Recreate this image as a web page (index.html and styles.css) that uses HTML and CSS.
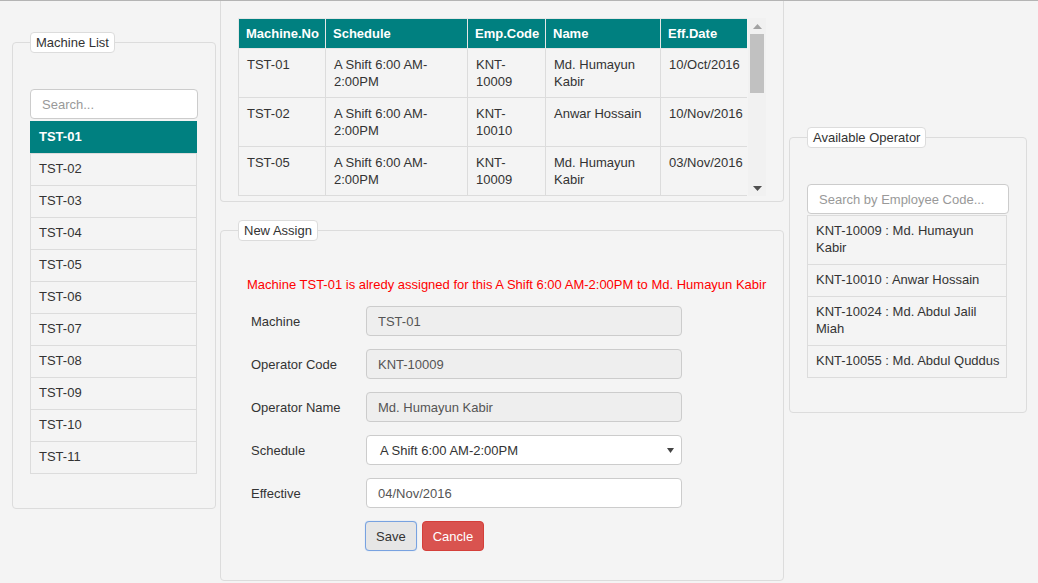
FILE: index.html
```html
<!DOCTYPE html>
<html>
<head>
<meta charset="utf-8">
<link rel="stylesheet" href="styles.css">
</head>
<body>
<div class="page">
  <div class="col-left">
    <fieldset class="panel">
      <legend>Machine List</legend>
      <input class="field search" type="text" placeholder="Search...">
      <ul class="list machines">
        <li class="active">TST-01</li>
        <li>TST-02</li>
        <li>TST-03</li>
        <li>TST-04</li>
        <li>TST-05</li>
        <li>TST-06</li>
        <li>TST-07</li>
        <li>TST-08</li>
        <li>TST-09</li>
        <li>TST-10</li>
        <li>TST-11</li>
      </ul>
    </fieldset>
  </div>

  <div class="col-center">
    <div class="table-panel">
      <div class="table-scroll">
        <div class="table-view">
          <table class="grid">
            <colgroup>
              <col class="c1"><col class="c2"><col class="c3"><col class="c4"><col class="c5">
            </colgroup>
            <thead>
              <tr><th>Machine.No</th><th>Schedule</th><th>Emp.Code</th><th>Name</th><th>Eff.Date</th></tr>
            </thead>
            <tbody>
              <tr><td>TST-01</td><td>A Shift 6:00 AM-2:00PM</td><td>KNT-10009</td><td>Md. Humayun Kabir</td><td>10/Oct/2016</td></tr>
              <tr><td>TST-02</td><td>A Shift 6:00 AM-2:00PM</td><td>KNT-10010</td><td>Anwar Hossain</td><td>10/Nov/2016</td></tr>
              <tr><td>TST-05</td><td>A Shift 6:00 AM-2:00PM</td><td>KNT-10009</td><td>Md. Humayun Kabir</td><td>03/Nov/2016</td></tr>
            </tbody>
          </table>
        </div>
        <div class="scrollbar">
          <div class="sb-arrow"><svg width="9" height="5" viewBox="0 0 9 5"><path d="M0 5 L4.5 0 L9 5 Z" fill="#a3a3a3"/></svg></div>
          <div class="sb-track"><div class="sb-thumb"></div></div>
          <div class="sb-arrow"><svg width="9" height="5" viewBox="0 0 9 5"><path d="M0 0 L9 0 L4.5 5 Z" fill="#505050"/></svg></div>
        </div>
      </div>
    </div>

    <fieldset class="panel assign">
      <legend>New Assign</legend>
      <p class="error">Machine TST-01 is alredy assigned for this A Shift 6:00 AM-2:00PM to Md. Humayun Kabir</p>
      <div class="form">
        <label class="lbl">Machine</label>
        <input class="field ro" type="text" value="TST-01" readonly>
        <label class="lbl">Operator Code</label>
        <input class="field ro" type="text" value="KNT-10009" readonly>
        <label class="lbl">Operator Name</label>
        <input class="field ro" type="text" value="Md. Humayun Kabir" readonly>
        <label class="lbl">Schedule</label>
        <div class="field select"><span>A Shift 6:00 AM-2:00PM</span><svg width="7" height="5" viewBox="0 0 7 5"><path d="M0 0 L7 0 L3.5 5 Z" fill="#444"/></svg></div>
        <label class="lbl">Effective</label>
        <input class="field" type="text" value="04/Nov/2016">
        <span></span>
        <div class="buttons">
          <button class="btn save">Save</button>
          <button class="btn cancel">Cancle</button>
        </div>
      </div>
    </fieldset>
  </div>

  <div class="col-right">
    <fieldset class="panel">
      <legend>Available Operator</legend>
      <input class="field search" type="text" placeholder="Search by Employee Code...">
      <ul class="list ops">
        <li>KNT-10009 : Md. Humayun Kabir</li>
        <li>KNT-10010 : Anwar Hossain</li>
        <li>KNT-10024 : Md. Abdul Jalil Miah</li>
        <li>KNT-10055 : Md. Abdul Quddus</li>
      </ul>
    </fieldset>
  </div>
</div>
</body>
</html>
```
FILE: styles.css
```css
* { box-sizing: border-box; }
html, body { margin: 0; padding: 0; }
body {
  background: #f4f4f4;
  border-top: 1px solid #b4b4b4;
  font-family: "Liberation Sans", Arial, sans-serif;
  font-size: 13px;
  line-height: 17px;
  color: #333;
  width: 1038px;
  height: 583px;
  overflow: hidden;
}
.page {
  display: flex;
  align-items: flex-start;
  padding-left: 12px;
}
.col-left { width: 204px; margin-top: 31px; }
.col-center { width: 564px; margin-left: 4px; }
.col-right { width: 238px; margin-left: 5px; margin-top: 126px; }

.panel {
  margin: 0;
  border: 1px solid #dcdcdc;
  border-radius: 4px;
  padding: 36px 17px 35px;
  min-width: 0;
}
.panel legend {
  font-size: 13px;
  line-height: 17px;
  padding: 1px 5px;
  background: #fff;
  border: 1px solid #dcdcdc;
  border-radius: 4px;
  color: #333;
}

.field {
  display: block;
  width: 100%;
  height: 30px;
  padding: 0 11px;
  border: 1px solid #ccc;
  border-radius: 4px;
  background: #fff;
  font-family: inherit;
  font-size: 13px;
  color: #555;
  outline: none;
}
.field::placeholder { color: #999; }
.search { margin-bottom: 2px; }

.list { list-style: none; margin: 0; padding: 0; width: calc(100% - 1px); }
.list li {
  border: 1px solid #dcdcdc;
  margin-bottom: -1px;
  padding: 7px 8px;
  line-height: 17px;
  color: #333;
  background: #f4f4f4;
}
.machines li { padding: 6px 8px 8px; }
.list li.active {
  background: #008080;
  border-color: #008080;
  color: #fff;
  font-weight: bold;
}
.ops { margin-top: -1px; width: calc(100% - 2px); }
.ops li { padding: 6px 0 8px 8px; }

.table-panel {
  border: 1px solid #dcdcdc;
  border-top: 0;
  border-radius: 0 0 4px 4px;
  padding: 17px 17px 5px;
}
.table-scroll { display: flex; height: 178px; }
.table-view { width: 509px; height: 178px; overflow: hidden; }
.grid {
  border-collapse: collapse;
  width: 509px;
  table-layout: fixed;
}
.c1 { width: 87px; } .c2 { width: 142px; } .c3 { width: 78px; } .c4 { width: 115px; } .c5 { width: 87px; }
.grid th, .grid td {
  border: 1px solid #dcdcdc;
  text-align: left;
  vertical-align: top;
  padding: 7px 8px;
  line-height: 17px;
}
.grid th {
  background: #008080;
  color: #fff;
  font-weight: bold;
  padding: 6px 7px 6px 7px;
  border-color: #e6e6e6;
}
.grid td { color: #333; height: 49px; }

.scrollbar {
  width: 18px;
  background: #f1f1f1;
  display: flex;
  flex-direction: column;
  margin-left: 1px;
}
.sb-arrow { height: 16px; display: flex; align-items: center; justify-content: center; }
.sb-track { flex: 1; padding: 0 2px; }
.sb-thumb { height: 59px; background: #c1c1c1; }

.assign { margin-top: 18px; padding-top: 35px; padding-bottom: 29px; }
.error { margin: 0 0 13px 9px; color: #ff0000; font-size: 13px; line-height: 17px; white-space: nowrap; }
.form {
  display: grid;
  grid-template-columns: 115px 316px;
  row-gap: 13px;
  padding-left: 13px;
}
.lbl { padding-top: 7px; color: #333; }
.ro { background: #eee; }
.select {
  display: flex;
  align-items: center;
  justify-content: space-between;
  padding: 0 7px 0 13px;
  color: #333;
}
.select svg { margin-top: 1px; }
.buttons { display: flex; gap: 5px; margin-left: -1px; }
.btn {
  height: 30px;
  font-family: inherit;
  font-size: 13px;
  border-radius: 4px;
  padding: 0 10px;
}
.save { background: #e6e6e6; border: 1px solid #78a2e0; color: #333; box-shadow: 0 0 1px #9cc0f0; }
.cancel { background: #d9534f; border: 1px solid #d43f3a; color: #fff; padding: 0 10px; }
```
